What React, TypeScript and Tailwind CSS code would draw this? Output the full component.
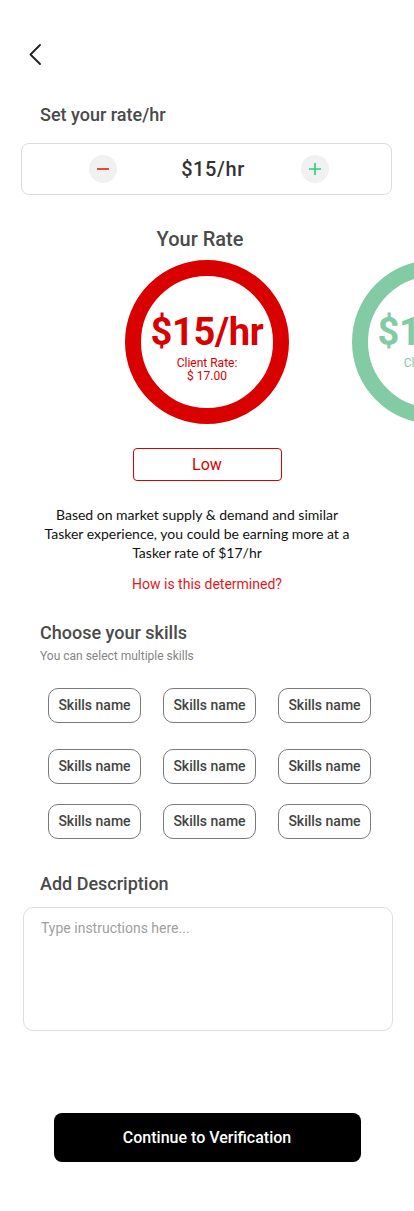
import React, { useState } from 'react';

const skills = [
  ['Skills name', 'Skills name', 'Skills name'],
  ['Skills name', 'Skills name', 'Skills name'],
  ['Skills name', 'Skills name', 'Skills name'],
];

const RateRing: React.FC<{ tone: 'red' | 'green' }> = ({ tone }) => {
  const ring = tone === 'red' ? 'border-[#d90000]' : 'border-[#82cba5]';
  const text = tone === 'red' ? 'text-[#d90000]' : 'text-[#82cba5]';
  return (
    <div
      className={`w-[164px] h-[164px] shrink-0 rounded-full border-[16px] ${ring} flex flex-col items-center justify-center`}
    >
      <span className={`text-[38px] leading-[44px] font-bold tracking-[-0.3px] ${text} mt-[8px]`}>$15/hr</span>
      <span className={`text-[12px] leading-[13px] ${text} mt-[3px]`}>Client Rate:</span>
      <span className={`text-[12px] leading-[13px] ${text}`}>$ 17.00</span>
    </div>
  );
};

const App: React.FC = () => {
  const [rate, setRate] = useState(15);
  const [picked, setPicked] = useState<string[]>([]);

  const toggle = (key: string) =>
    setPicked((p) => (p.includes(key) ? p.filter((k) => k !== key) : [...p, key]));

  return (
    <div
      className="min-h-[1211px] w-full bg-white flex flex-col text-[#4a4a4a]"
      style={{ fontFamily: "Roboto, 'Liberation Sans', sans-serif" }}
    >
      {/* header */}
      <div className="pt-[44px] pl-[29px]">
        <button aria-label="Back" className="block">
          <svg width="12" height="21" viewBox="0 0 12 21" fill="none" stroke="#1f1f1f" strokeWidth={1.8}>
            <path d="M11 1 L1.5 10.5 L11 20" strokeLinecap="round" strokeLinejoin="round" />
          </svg>
        </button>
      </div>

      <h2 className="mt-[39px] pl-[40px] text-[18px] leading-[22px] font-medium">Set your rate/hr</h2>

      {/* rate stepper */}
      <div className="mt-[17px] ml-[21px] mr-[22px] h-[52px] border border-[#dcdcdc] rounded-[8px] flex items-center pl-[67px] pr-[62px]">
        <button
          onClick={() => setRate((r) => Math.max(1, r - 1))}
          className="w-[28px] h-[28px] rounded-full bg-[#f1f1f1] flex items-center justify-center"
          aria-label="Decrease"
        >
          <span className="block w-[12px] h-[2px] bg-[#e8473d]" />
        </button>
        <div className="flex-1 text-center pl-[8px] text-[20px] leading-[24px] font-medium tracking-[0.6px] text-[#333]">
          ${rate}/hr
        </div>
        <button
          onClick={() => setRate((r) => r + 1)}
          className="w-[28px] h-[28px] rounded-full bg-[#f1f1f1] flex items-center justify-center"
          aria-label="Increase"
        >
          <svg width="12" height="12" viewBox="0 0 12 12" stroke="#22cf7c" strokeWidth={1.6}>
            <path d="M6 0 V12 M0 6 H12" />
          </svg>
        </button>
      </div>

      {/* your rate */}
      <div className="mt-[33px] text-center pr-[14px] text-[20px] leading-[22px] font-medium">Your Rate</div>
      <div className="mt-[10px] w-full overflow-hidden">
        <div className="flex gap-[63px] pl-[125px]">
          <RateRing tone="red" />
          <RateRing tone="green" />
        </div>
      </div>

      <div className="mt-[24px] flex justify-center">
        <div className="w-[149px] h-[33px] border border-[#d90000] rounded-[4px] flex items-center justify-center text-[16px] text-[#d90000]">
          Low
        </div>
      </div>

      <p
        className="mt-[24px] pr-[20px] text-center text-[14px] leading-[19px] text-[#111]"
        style={{ fontFamily: "Lato, 'Noto Sans', sans-serif" }}
      >
        Based on market supply &amp; demand and similar
        <br />
        Tasker experience, you could be earning more at a
        <br />
        Tasker rate of $17/hr
      </p>

      <div className="mt-[13px] text-center text-[14px] leading-[19px] text-[#e3161c]">How is this determined?</div>

      {/* skills */}
      <h2 className="mt-[28px] pl-[40px] text-[18px] leading-[22px] font-medium">Choose your skills</h2>
      <div className="mt-[4px] pl-[40px] text-[12px] leading-[16px] text-[#858585]">You can select multiple skills</div>

      <div className="mt-[24px] pl-[48px] flex flex-col">
        {skills.map((row, ri) => (
          <div key={ri} className={`flex gap-[22px] ${ri === 1 ? 'mt-[26px]' : ri === 2 ? 'mt-[20px]' : ''}`}>
            {row.map((s, ci) => {
              const key = `${ri}-${ci}`;
              const on = picked.includes(key);
              return (
                <button
                  key={key}
                  onClick={() => toggle(key)}
                  className={`w-[93px] h-[35px] rounded-[10px] border border-[#7a7a7a] text-[14px] font-medium flex items-center justify-center ${
                    on ? 'bg-[#f3f3f3] text-[#222]' : 'text-[#444]'
                  }`}
                >
                  {s}
                </button>
              );
            })}
          </div>
        ))}
      </div>

      {/* description */}
      <h2 className="mt-[34px] pl-[40px] text-[18px] leading-[22px] font-medium">Add Description</h2>
      <textarea
        placeholder="Type instructions here..."
        className="mt-[12px] ml-[23px] mr-[21px] h-[124px] resize-none border border-[#dedede] rounded-[10px] pl-[17px] pt-[11px] text-[14px] leading-[18px] text-[#333] placeholder:text-[#a0a0a0] outline-none"
      />

      <div className="mt-[82px] pb-[49px] flex justify-center">
        <button className="w-[307px] h-[49px] rounded-[8px] bg-black text-white text-[16px] font-medium">
          Continue to Verification
        </button>
      </div>
    </div>
  );
};

export default App;
